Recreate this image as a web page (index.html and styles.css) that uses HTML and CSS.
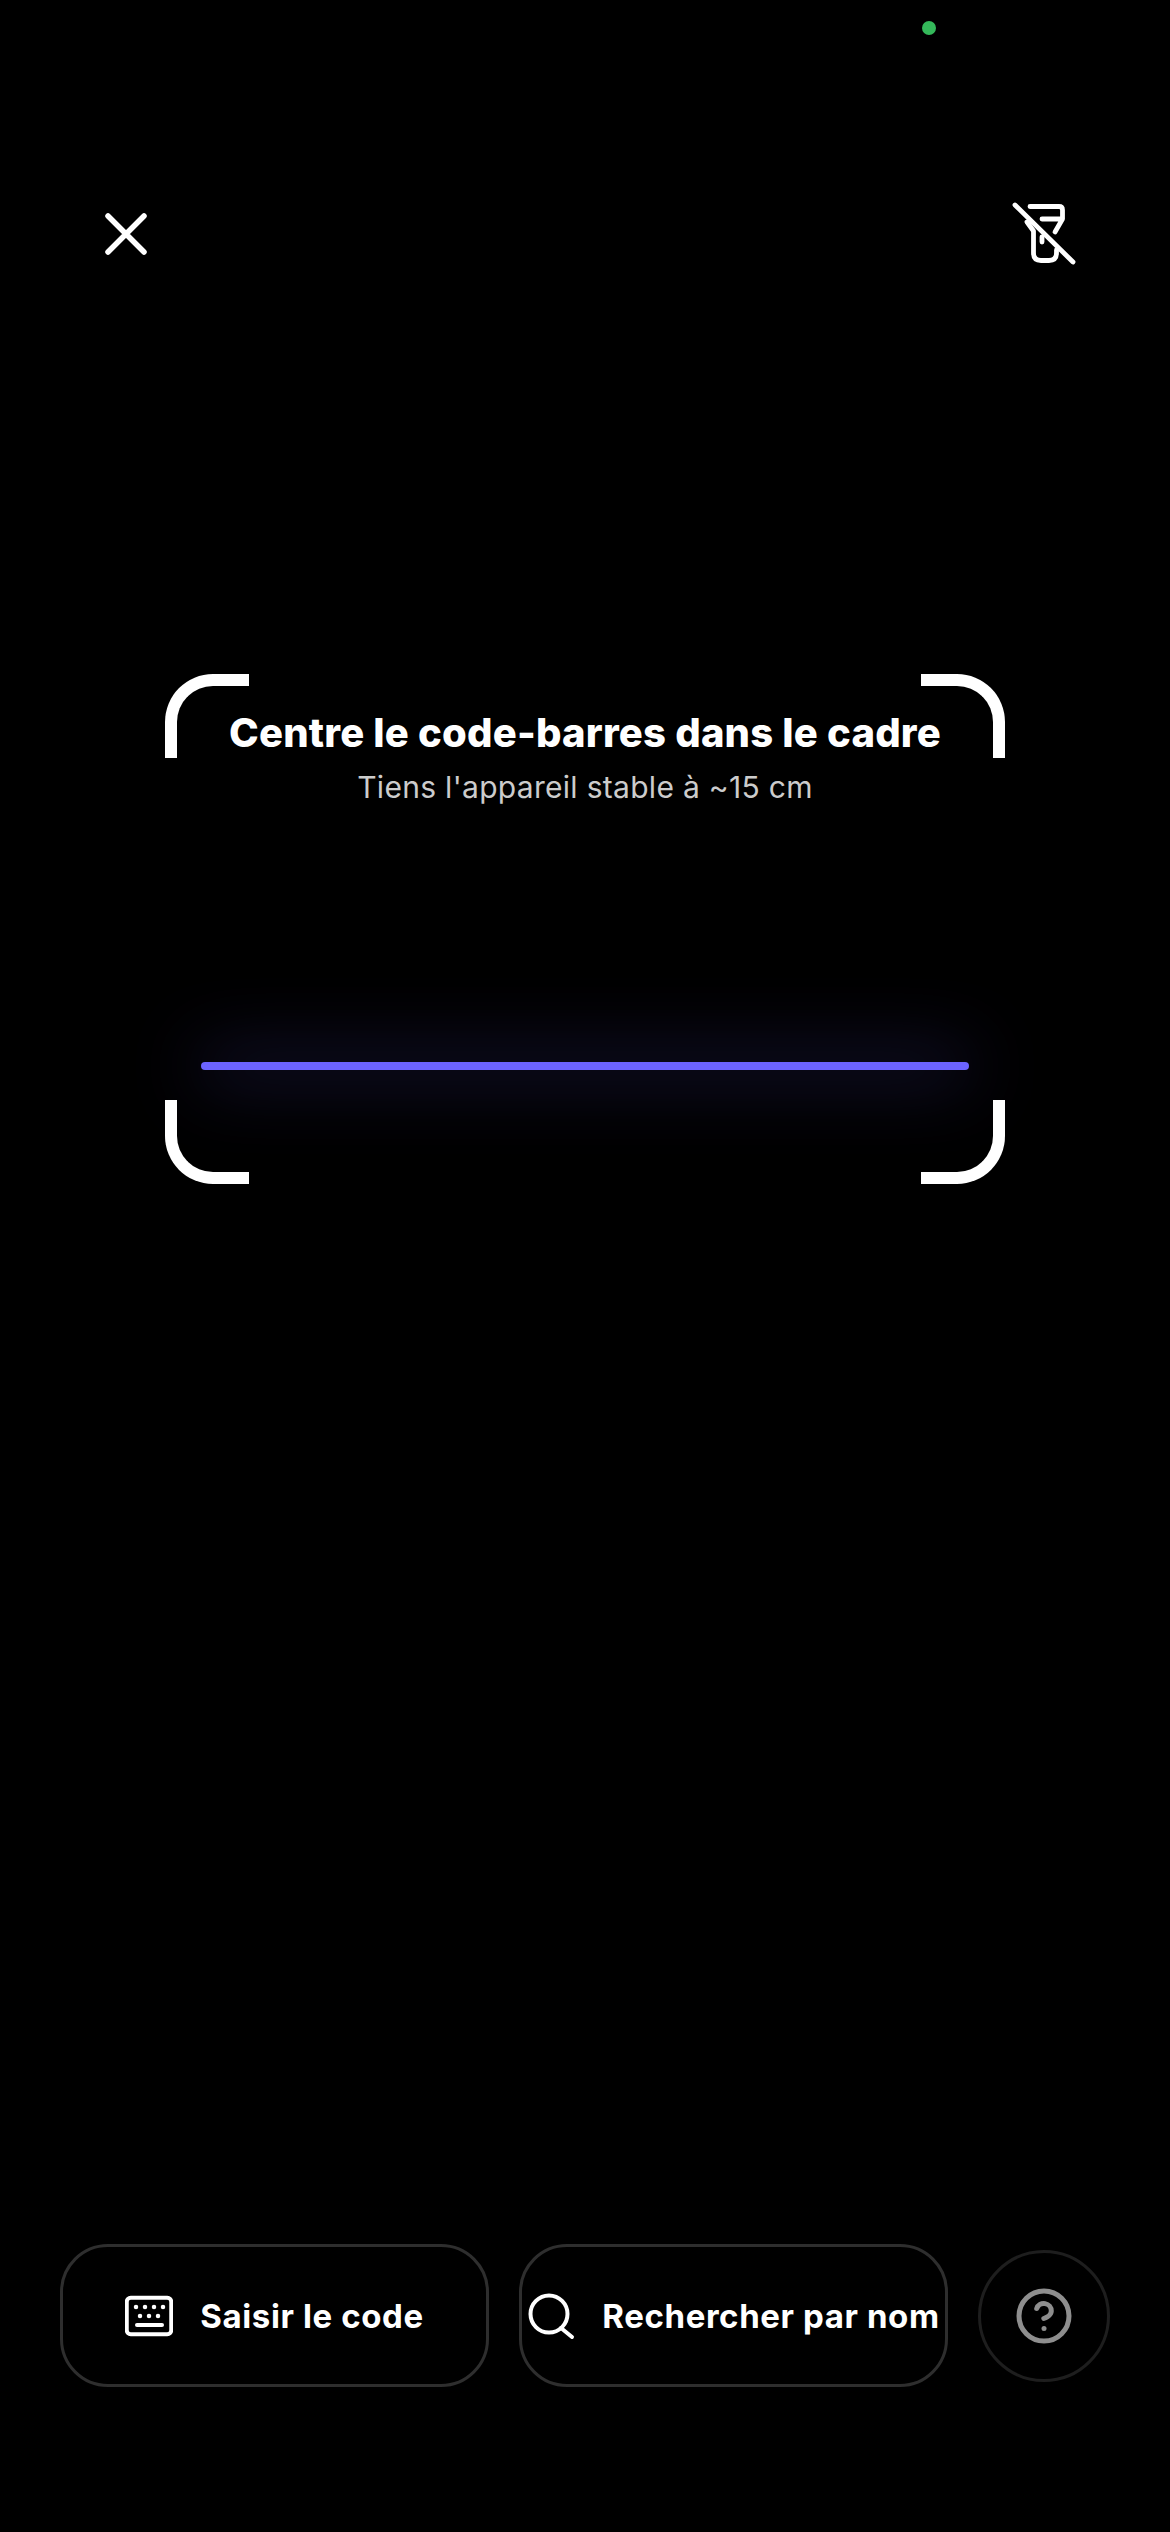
FILE: index.html
```html
<!DOCTYPE html>
<html lang="fr">
<head>
  <meta charset="UTF-8">
  <meta name="viewport" content="width=device-width, initial-scale=1.0">
  <title>Scanner</title>
  <link rel="stylesheet" href="styles.css">
</head>
<body>
  <span class="status-dot"></span>

  <div class="top-bar">
    <svg class="top-icon" viewBox="0 0 64 64">
      <path d="M14 14L50 50M50 14L14 50"/>
    </svg>
    <svg class="top-icon flash-off" viewBox="0 0 64 64">
      <path d="M3 3L61 60"/>
      <path d="M18 4.5H47Q50.5 4.500 50.500 8V17H30M50.500 17L43 30"/>
      <path d="M15 20L21.500 29V51Q21.500 58.500 29 58.500H37Q44.500 58.500 44.500 51V48"/>
      <path d="M30 35V40"/>
    </svg>
  </div>

  <div class="frame">
    <span class="corner corner-tl"></span>
    <span class="corner corner-tr"></span>
    <span class="corner corner-bl"></span>
    <span class="corner corner-br"></span>
    <h1 class="frame-title">Centre le code-barres dans le cadre</h1>
    <p class="frame-hint">Tiens l'appareil stable à ~15 cm</p>
    <div class="scan-line"></div>
  </div>

  <div class="actions">
    <button class="action-btn">
      <svg class="action-icon" viewBox="0 0 48 48">
        <rect x="1.750" y="5.750" width="44.500" height="36.500" rx="4"/>
        <path class="dots" d="M11 15h.01M20 15h.01M29 15h.01M38 15h.01M15 24h.01M24 24h.01M33 24h.01"/>
        <path d="M12 33H37"/>
      </svg>
      <span>Saisir le code</span>
    </button>
    <button class="action-btn">
      <svg class="action-icon" viewBox="0 0 48 48">
        <circle cx="22" cy="22" r="18.500"/>
        <path d="M34 36L45 45"/>
      </svg>
      <span>Rechercher par nom</span>
    </button>
    <button class="help-btn">
      <svg class="help-icon" viewBox="0 0 24 24">
        <circle cx="12" cy="12" r="10"/>
        <path d="M9.090 9a3 3 0 0 1 5.830 1c0 2-3 3-3 3"/>
        <path d="M12 17h.01"/>
      </svg>
    </button>
  </div>
</body>
</html>
```

FILE: styles.css
```css
* {
  box-sizing: border-box;
}

body {
  margin: 0;
  height: 2532px;
  background-color: #000;
  color: #fff;
  font-family: Inter, "Noto Sans", sans-serif;
  display: flex;
  flex-direction: column;
  position: relative;
  overflow: hidden;
}

/* camera in use indicator */
.status-dot {
  position: absolute;
  top: 21px;
  left: 922px;
  width: 14px;
  height: 14px;
  border-radius: 50%;
  background-color: #34b85a;
}

.top-bar {
  display: flex;
  justify-content: space-between;
  padding: 202px 94px 0;
}

.top-icon {
  width: 64px;
  height: 64px;
  fill: none;
  stroke: #fff;
  stroke-width: 5.500;
  stroke-linecap: round;
  stroke-linejoin: round;
}

.flash-off {
  stroke-width: 4.800;
}

.frame {
  position: relative;
  width: 840px;
  height: 510px;
  margin: 408px 0 0 165px;
  padding: 36px 36px 0;
  text-align: center;
}

.corner {
  position: absolute;
  width: 84px;
  height: 84px;
  border: 0 solid #fff;
}

.corner-tl {
  top: 0;
  left: 0;
  border-top-width: 12px;
  border-left-width: 12px;
  border-top-left-radius: 48px;
}

.corner-tr {
  top: 0;
  right: 0;
  border-top-width: 12px;
  border-right-width: 12px;
  border-top-right-radius: 48px;
}

.corner-bl {
  bottom: 0;
  left: 0;
  border-bottom-width: 12px;
  border-left-width: 12px;
  border-bottom-left-radius: 48px;
}

.corner-br {
  bottom: 0;
  right: 0;
  border-bottom-width: 12px;
  border-right-width: 12px;
  border-bottom-right-radius: 48px;
}

.frame-title {
  margin: -1px 0 0;
  font-size: 40px;
  line-height: 48px;
  font-weight: 800;
  letter-spacing: 0.2px;
  white-space: nowrap;
}

.frame-hint {
  margin: 9px 0 0;
  font-size: 30px;
  line-height: 42px;
  font-weight: 400;
  color: #cccccc;
  letter-spacing: 0.3px;
  white-space: nowrap;
}

.scan-line {
  height: 8px;
  margin-top: 254px;
  border-radius: 4px;
  background-color: #6c63ff;
  box-shadow: 0 0 70px rgba(108, 99, 255, 0.85);
}

.actions {
  display: flex;
  align-items: center;
  gap: 30px;
  margin-top: auto;
  padding: 0 60px 145px;
}

.action-btn {
  flex: 1;
  height: 143px;
  padding: 0;
  display: flex;
  align-items: center;
  justify-content: center;
  gap: 27px;
  background: none;
  border: 3px solid #2e2e2e;
  border-radius: 48px;
  color: #fff;
  font-family: inherit;
  font-size: 33px;
  font-weight: 700;
  letter-spacing: 0.6px;
  white-space: nowrap;
}

.action-icon {
  width: 48px;
  height: 48px;
  flex-shrink: 0;
  fill: none;
  stroke: #fff;
  stroke-width: 4;
  stroke-linecap: round;
  stroke-linejoin: round;
}

.action-icon .dots {
  stroke-width: 4.500;
}

.help-btn {
  width: 132px;
  height: 132px;
  flex-shrink: 0;
  padding: 0;
  display: flex;
  align-items: center;
  justify-content: center;
  background: none;
  border: 3px solid #1e1e1e;
  border-radius: 50%;
}

.help-icon {
  width: 60px;
  height: 60px;
  fill: none;
  stroke: #8e8e8e;
  stroke-width: 2;
  stroke-linecap: round;
  stroke-linejoin: round;
}
```
